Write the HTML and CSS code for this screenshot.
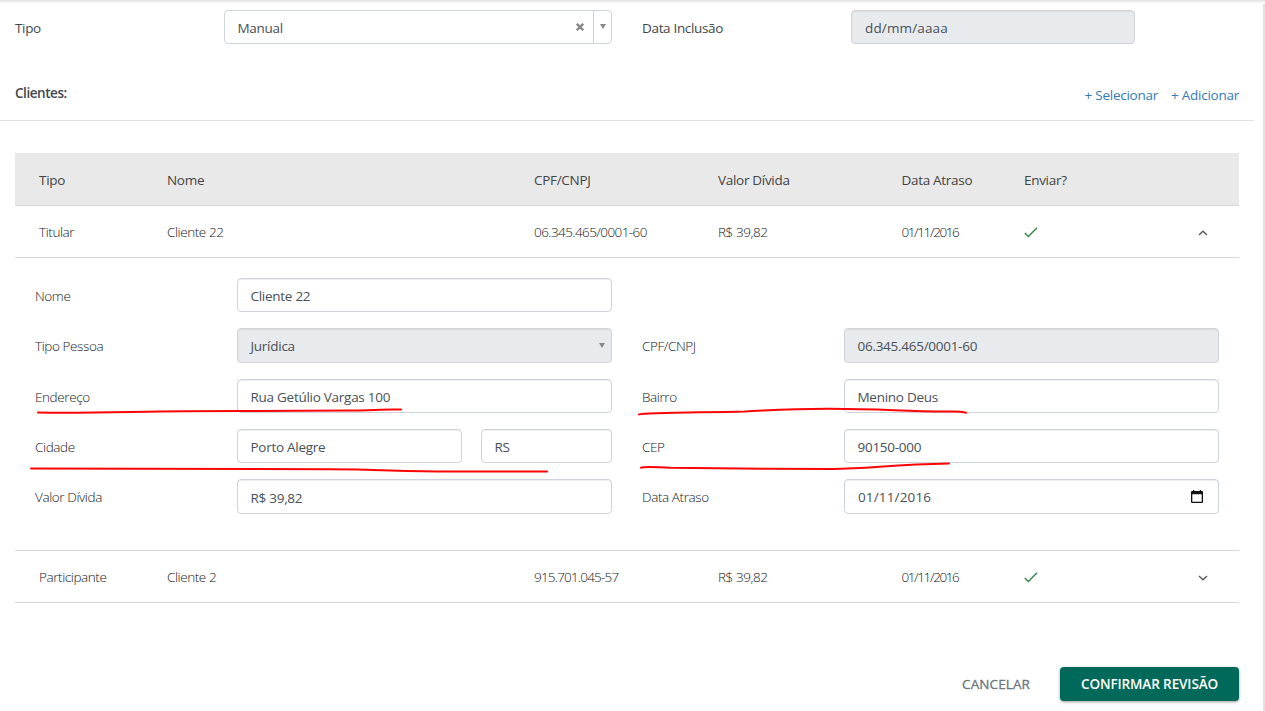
FILE: index.html
```html
<!DOCTYPE html>
<html lang="pt-BR">
<head>
<meta charset="utf-8">
<title>Revisão</title>
<link rel="stylesheet" href="styles.css">
</head>
<body>
<main class="page">
  <section class="filters">
    <span class="label">Tipo</span>
    <div class="field select-clear">
      <span class="value">Manual</span>
      <svg class="clear" width="8" height="8" viewBox="0 0 8 8"><path d="M.8 .8 7.2 7.2M7.2 .8 .8 7.2" stroke="#888" stroke-width="2.3"/></svg>
      <span class="toggle"><svg width="6" height="5" viewBox="0 0 6 5"><path d="M0 0H6L3 5Z" fill="#888"/></svg></span>
    </div>
    <span class="label">Data Inclusão</span>
    <div class="field disabled date-empty"><span class="datetext">dd/mm/aaaa</span></div>
  </section>
  <section class="clients-head">
    <h2 class="title">Clientes:</h2>
    <nav class="links"><a>+ Selecionar</a><a>+ Adicionar</a></nav>
  </section>
  <section class="table">
    <div class="row head">
      <span>Tipo</span><span>Nome</span><span>CPF/CNPJ</span><span>Valor Dívida</span><span>Data Atraso</span><span>Enviar?</span><span></span>
    </div>
    <div class="row">
      <span>Titular</span><span>Cliente 22</span><span class="doc">06.345.465/0001-60</span><span>R$ 39,82</span><span class="day">01/11/2016</span>
      <span><svg class="check" width="14" height="11" viewBox="0 0 14 11"><path d="M.8 6 4.4 9.5 13 .8" fill="none" stroke="#2f8540" stroke-width="1.35"/></svg></span>
      <span><svg class="chev" width="10" height="6" viewBox="0 0 10 6"><path d="M1 5 5 1.2 9 5" fill="none" stroke="#555" stroke-width="1.3"/></svg></span>
    </div>
    <div class="details">
      <span class="lbl">Nome</span><div class="field">Cliente 22</div><span></span><span></span>
      <span class="lbl">Tipo Pessoa</span><div class="field disabled picker"><span class="picked">Jurídica</span><svg width="6" height="5" viewBox="0 0 6 5"><path d="M0 0H6L3 5Z" fill="#888"/></svg></div>
      <span class="lbl">CPF/CNPJ</span><div class="field disabled">06.345.465/0001-60</div>
      <span class="lbl">Endereço</span><div class="field">Rua Getúlio Vargas 100</div>
      <span class="lbl">Bairro</span><div class="field">Menino Deus</div>
      <span class="lbl">Cidade</span><div class="city"><div class="field">Porto Alegre</div><div class="field">RS</div></div>
      <span class="lbl">CEP</span><div class="field">90150-000</div>
      <span class="lbl">Valor Dívida</span><div class="field low">R$ 39,82</div>
      <span class="lbl">Data Atraso</span><div class="field picker date"><span class="datetext">01/11/2016</span>
        <svg width="12" height="13" viewBox="0 0 12 13"><path fill="#111" fill-rule="evenodd" d="M1 1H2V0H3.3V1H8.7V0H10V1H11Q12 1 12 2V12Q12 13 11 13H1Q0 13 0 12V2Q0 1 1 1ZM1.3 4.2V11.7H10.7V4.2Z"/></svg></div>
    </div>
    <div class="row">
      <span>Participante</span><span>Cliente 2</span><span class="doc short">915.701.045-57</span><span>R$ 39,82</span><span class="day">01/11/2016</span>
      <span><svg class="check" width="14" height="11" viewBox="0 0 14 11"><path d="M.8 6 4.4 9.5 13 .8" fill="none" stroke="#2f8540" stroke-width="1.35"/></svg></span>
      <span><svg class="chev" width="10" height="6" viewBox="0 0 10 6"><path d="M1 1 5 4.8 9 1" fill="none" stroke="#555" stroke-width="1.3"/></svg></span>
    </div>
  </section>
  <footer class="actions">
    <button class="btn cancel">CANCELAR</button>
    <button class="btn confirm">CONFIRMAR REVISÃO</button>
  </footer>
  <svg class="marks" width="1265" height="711" viewBox="0 0 1265 711">
    <path d="M38 412.6C90 413.5 130 411.7 185 411.3S310 411 350 410.6 375 409 401 409.5"/>
    <path d="M31 468.6C130 468.6 240 469.3 330 469.3 380 469.5 400 471.4 450 471.6H547"/>
    <path d="M639 414.4C645 412.5 700 412.5 745 411.4 775 410 790 408.6 830 408.7 885 408.7 905 411.8 950 411.5 960 411.3 963 411.8 966 412.8"/>
    <path d="M641 467.7C645 466 655 467.2 670 467.8 715 468.5 780 469 832 468.9 870 468.8 890 464.5 949 463.6"/>
  </svg>
</main>
</body>
</html>
```
FILE: styles.css
```css
* { box-sizing: border-box; }
body { margin: 0; background: #fff; }
.page {
  position: relative;
  width: 1265px;
  height: 711px;
  overflow: hidden;
  padding-right: 11px;
  display: flex;
  flex-direction: column;
  font: 13.5px/20px "Open Sans", "Noto Sans", sans-serif;
  letter-spacing: -.33px;
  color: #43474b;
  background:
    linear-gradient(#dedede, #f3f3f3 2px, #fff 4px) top / 100% 4px no-repeat,
    linear-gradient(#e2e2e2, #e2e2e2) 1263px 0 / 2px 100% no-repeat,
    #fff;
}
.filters {
  display: grid;
  grid-template-columns: 209px 388px 30px 209px 284px;
  padding: 10px 0 0 15px;
  height: 76px;
  align-items: start;
}
.filters .label { line-height: 36px; }
.filters .label:nth-of-type(2) { grid-column: 4; }
.field {
  height: 34.4px;
  border: 1px solid #cfd4da;
  border-radius: 4px;
  background: #fff;
  box-shadow: inset 0 1px 1px rgba(0, 0, 0, .07);
  padding: 0 12.5px;
  line-height: 34px;
  letter-spacing: -.27px;
  color: #495057;
  white-space: nowrap;
}
.disabled { background: #e8ebee; }
.select-clear { display: flex; align-items: center; padding-right: 0; height: 34px; box-shadow: none; }
.select-clear .value { flex: 1; line-height: 32px; padding-top: 2px; }
.clear { margin: 0 9px 1px 0; }
.toggle {
  width: 18px;
  align-self: stretch;
  border-left: 1px solid #cfd4da;
  display: flex;
  align-items: center;
  justify-content: center;
  padding-bottom: 1px;
}
.date-empty { height: 34px; padding-left: 13px; line-height: 35px; }
.datetext { letter-spacing: .15px; }
.clients-head {
  height: 45px;
  display: flex;
  justify-content: space-between;
  border-bottom: 1px solid #e2e2e2;
  padding: 7px 15px 0;
}
.title { margin: 0; font-size: 13.5px; line-height: 20px; font-weight: 600; letter-spacing: -.45px; }
.links { display: flex; gap: 13px; padding-top: 2px; color: #337ab7; letter-spacing: -.25px; }
.table { margin: 32px 15px 0; width: 1224px; color: #15181b; }
.row {
  display: grid;
  grid-template-columns: 128px 367px 184px 183.5px 122.5px 164px 1fr;
  height: 52px;
  line-height: 52px;
  padding-left: 24px;
  border-bottom: 1px solid #d8d8d8;
  font-weight: 300;
  letter-spacing: -.42px;
}
.row.head { background: #e9e9e9; height: 53px; line-height: 54px; font-weight: 400; color: #444; letter-spacing: -.3px; }
.doc { letter-spacing: -.58px; }
.doc.short { letter-spacing: -.8px; }
.day { letter-spacing: -1.4px; }
.row svg { display: block; }
.check { margin-top: 21px; }
.chev { margin: 24px 0 0 10px; }
.details {
  display: grid;
  grid-template-columns: 202px 375px 232px 375px;
  row-gap: 15.95px;
  grid-auto-rows: 34.4px;
  padding: 20px;
  height: 293px;
  border-bottom: 1px solid #d8d8d8;
}
.details > :nth-child(4n+3) { margin-left: 30px; }
.lbl { font-weight: 300; line-height: 36px; letter-spacing: -.4px; }
.city { display: grid; grid-template-columns: 225px 131px; gap: 19px; }
.picker { display: flex; justify-content: space-between; align-items: center; padding-right: 6px; }
.picked { line-height: 32px; padding-top: 1.6px; }
.picker.date { padding: 0 15px 0 13px; }
.low { line-height: 36px; }
.actions { display: flex; justify-content: flex-end; padding: 64px 15px 0; }
.btn {
  height: 34px;
  border: 0;
  border-radius: 4px;
  background: none;
  padding: 1px 0 0;
  font: 600 13.5px/33px "Open Sans", "Noto Sans", sans-serif;
  letter-spacing: -.1px;
  white-space: nowrap;
}
.cancel { width: 128px; color: #6c757d; font-weight: 400; letter-spacing: .1px; -webkit-text-stroke: .3px #6c757d; }
.confirm { width: 179px; background: #00695a; color: #fff; box-shadow: 0 1px 3px rgba(0, 0, 0, .4); }
.marks { position: absolute; left: 0; top: 0; fill: none; stroke: #fa0404; stroke-width: 2; stroke-linecap: round; }
```
